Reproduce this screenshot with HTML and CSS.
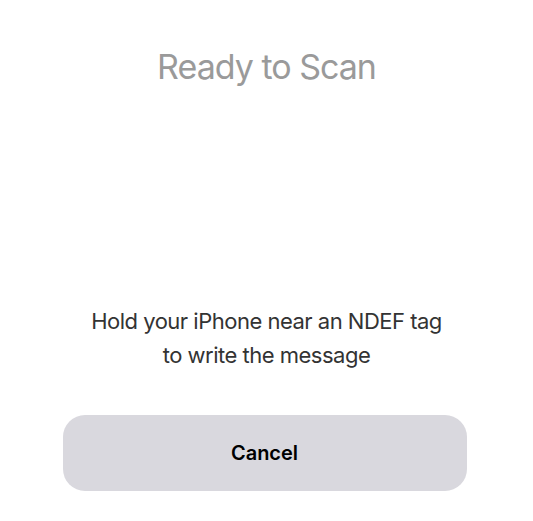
FILE: index.html
```html
<!DOCTYPE html>
<html>
<head>
<meta charset="utf-8">
<link rel="stylesheet" href="styles.css">
</head>
<body>
<div class="sheet">
  <h1 class="title">Ready to Scan</h1>
  <div class="spacer"></div>
  <p class="message">Hold your iPhone near an NDEF tag<br>to write the message</p>
  <button class="cancel">Cancel</button>
</div>
</body>
</html>
```
FILE: styles.css
```css
html, body {
  margin: 0;
  padding: 0;
  background: #ffffff;
}
.sheet {
  width: 533px;
  height: 521px;
  display: flex;
  flex-direction: column;
  align-items: center;
  font-family: Inter, "Noto Sans", sans-serif;
  box-sizing: border-box;
  padding-top: 45px;
}
.title {
  margin: 0;
  font-size: 34px;
  font-weight: 400;
  line-height: 44px;
  color: #9a9a9a;
  letter-spacing: -1px;
}
.spacer {
  height: 215px;
}
.message {
  margin: 0;
  text-align: center;
  font-size: 22px;
  line-height: 34px;
  color: #333333;
  letter-spacing: -0.5px;
}
.cancel {
  margin-top: 43px;
  width: 404px;
  height: 76px;
  border: none;
  border-radius: 22px;
  background: #d9d8de;
  font-family: Inter, "Noto Sans", sans-serif;
  font-size: 20px;
  font-weight: 600;
  color: #000000;
  margin-left: -4px;
}
```
